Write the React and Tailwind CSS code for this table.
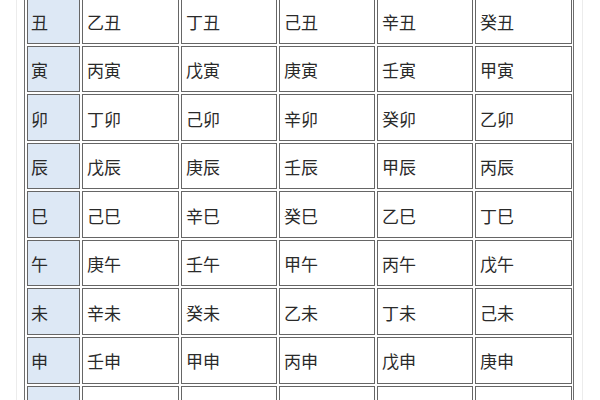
const rows = [
  ["丑", ["乙丑", "丁丑", "己丑", "辛丑", "癸丑"]],
  ["寅", ["丙寅", "戊寅", "庚寅", "壬寅", "甲寅"]],
  ["卯", ["丁卯", "己卯", "辛卯", "癸卯", "乙卯"]],
  ["辰", ["戊辰", "庚辰", "壬辰", "甲辰", "丙辰"]],
  ["巳", ["己巳", "辛巳", "癸巳", "乙巳", "丁巳"]],
  ["午", ["庚午", "壬午", "甲午", "丙午", "戊午"]],
  ["未", ["辛未", "癸未", "乙未", "丁未", "己未"]],
  ["申", ["壬申", "甲申", "丙申", "戊申", "庚申"]],
  // next row is cut off by the bottom edge, only its borders show
  ["", ["", "", "", "", ""]],
]

export default function App() {
  return (
    <div
      className="w-[600px] h-[400px] overflow-hidden bg-white"
      style={{ fontFamily: '"Noto Sans CJK SC", "Noto Sans", sans-serif' }}
    >
      <div className="ml-[16px] w-[567px] border-x border-[#ececec] h-[420px] -mt-[6px]">
        <div className="ml-[7px] w-[550px] border border-[#6e6e6e] p-[2px]">
          <div className="grid grid-cols-[53px_97px_96px_96px_96px_97px] auto-rows-[46.57px] gap-[2px]">
            {rows.map(([branch, cells], i) => (
              <Row key={i} branch={branch} cells={cells} />
            ))}
          </div>
        </div>
      </div>
    </div>
  )
}

const Row = ({ branch, cells }) => {
  return (
    <>
      <div className="flex items-center pl-[3px] pt-[2px] border border-[#666] bg-[#dde8f5] text-[17px] text-[#2a2a2a]">
        {branch}
      </div>
      {cells.map((c, i) => (
        <div
          key={i}
          className="flex items-center pl-[4px] pt-[2px] border border-[#666] bg-white text-[17px] text-[#2a2a2a]"
        >
          {c}
        </div>
      ))}
    </>
  )
}
